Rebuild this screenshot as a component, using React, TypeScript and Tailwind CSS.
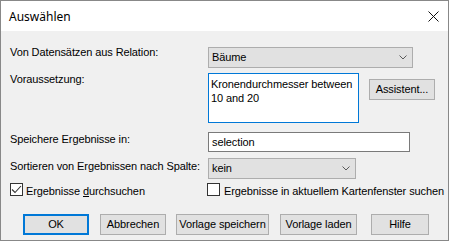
import React from "react";

function Chevron() {
    return (
        <svg width="8" height="5" viewBox="0 0 8 5" className="shrink-0">
            <polyline points="0.5,0.5 4,4 7.5,0.5" fill="none" stroke="#5a5a5a" strokeWidth="1" />
        </svg>
    );
}

function Combo({ value, width }: { value: string; width: string }) {
    return (
        <div className={`${width} h-[21px] bg-[#e1e1e1] border border-[#adadad] flex items-center justify-between pl-[3px] pr-[5px]`}>
            <span>{value}</span>
            <Chevron />
        </div>
    );
}

function CheckBox({ checked }: { checked: boolean }) {
    return (
        <div className="w-[13px] h-[13px] bg-white border border-[#333] shrink-0 flex items-center justify-center">
            {checked && (
                <svg width="11" height="11" viewBox="0 0 11 11">
                    <polyline points="1,5.5 4,8.5 10,2" fill="none" stroke="#333" strokeWidth="1.1" />
                </svg>
            )}
        </div>
    );
}

function Btn({ label, width, focused }: { label: string; width: string; focused?: boolean }) {
    return (
        <div
            className={`${width} h-[21px] bg-[#e1e1e1] flex items-center justify-center whitespace-nowrap ${
                focused ? "border-2 border-[#0078d7]" : "border border-[#adadad]"
            }`}
        >
            {label}
        </div>
    );
}

export default function App() {
    return (
        <div className="w-[449px] h-[242px] bg-white">
            <div className="w-[449px] h-[241px] border border-[#888] flex flex-col font-['Liberation_Sans',Arial,sans-serif] text-[11px] leading-[13px] tracking-[-0.1px] text-black">
                {/* title bar */}
                <div className="h-[30px] bg-white flex items-center justify-between pl-[8px] pr-[9px]">
                    <span className="font-['Noto_Sans',sans-serif] text-[12px] leading-[16px] tracking-normal mt-px">Auswählen</span>
                    <svg width="11" height="11" viewBox="0 0 11 11">
                        <path d="M0.5 0.5 L10.5 10.5 M10.5 0.5 L0.5 10.5" stroke="#111" strokeWidth="1" />
                    </svg>
                </div>

                {/* body */}
                <div className="flex-1 bg-[#f0f0f0] pl-[9px] pt-[16px] flex flex-col whitespace-nowrap">
                    <div className="flex items-start">
                        <div className="w-[198px] -mt-px">Von Datensätzen aus Relation:</div>
                        <Combo value="Bäume" width="w-[205px]" />
                    </div>

                    <div className="flex items-start mt-[5px]">
                        <div className="w-[198px]">Voraussetzung:</div>
                        <div className="w-[151px] h-[50px] bg-white border border-[#0078d7] pl-[2px] pt-[3px] leading-[14px]">
                            Kronendurchmesser between
                            <br />
                            10 and 20
                        </div>
                        <div className="ml-[10px] mt-[6px]">
                            <Btn label="Assistent..." width="w-[66px]" />
                        </div>
                    </div>

                    <div className="flex items-start mt-[9px]">
                        <div className="w-[198px] mt-px">Speichere Ergebnisse in:</div>
                        <div className="w-[202px] h-[20px] bg-white border border-[#7a7a7a] pl-[3px] flex items-center">selection</div>
                    </div>

                    <div className="flex items-start mt-[6px]">
                        <div className="w-[198px] mt-[2px]">Sortieren von Ergebnissen nach Spalte:</div>
                        <Combo value="kein" width="w-[148px]" />
                    </div>

                    <div className="flex items-start mt-[4px]">
                        <div className="w-[197px] flex items-start">
                            <CheckBox checked />
                            <span className="ml-[3px] mt-[2px]">
                                Ergebnisse <span className="underline underline-offset-1">d</span>urchsuchen
                            </span>
                        </div>
                        <div className="flex items-start">
                            <CheckBox checked={false} />
                            <span className="ml-[4px] mt-[2px]">Ergebnisse in aktuellem Kartenfenster suchen</span>
                        </div>
                    </div>

                    <div className="flex items-start mt-[16px] ml-[13px]">
                        <Btn label="OK" width="w-[66px]" focused />
                        <div className="ml-[11px]">
                            <Btn label="Abbrechen" width="w-[66px]" />
                        </div>
                        <div className="ml-[10px]">
                            <Btn label="Vorlage speichern" width="w-[93px]" />
                        </div>
                        <div className="ml-[11px]">
                            <Btn label="Vorlage laden" width="w-[77px]" />
                        </div>
                        <div className="ml-[14px]">
                            <Btn label="Hilfe" width="w-[58px]" />
                        </div>
                    </div>
                </div>
            </div>
        </div>
    );
}
